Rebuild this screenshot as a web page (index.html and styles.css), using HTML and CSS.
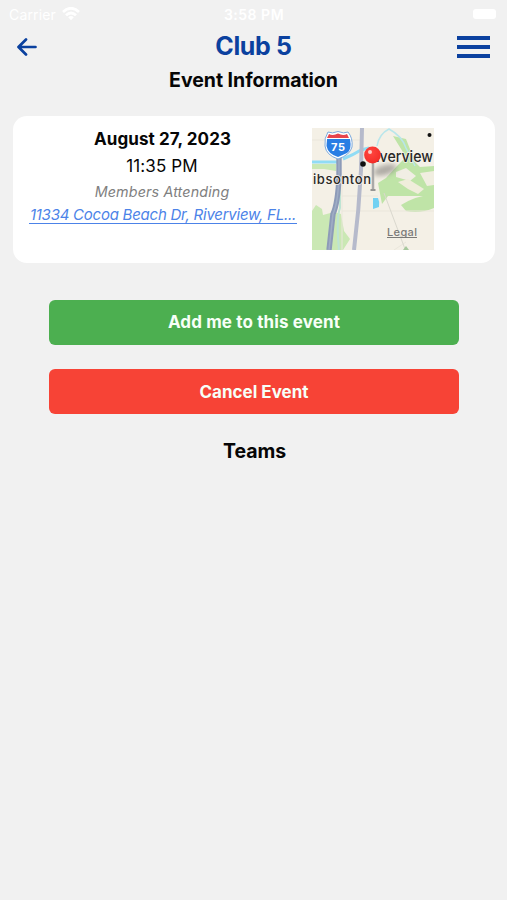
FILE: index.html
```html
<!DOCTYPE html>
<html lang="en">
<head>
<meta charset="utf-8">
<meta name="viewport" content="width=device-width, initial-scale=1">
<title>Event Information</title>
<link rel="stylesheet" href="styles.css">
</head>
<body>
<div class="status">
  <div class="carrier"><span>Carrier</span>
    <svg width="18" height="14" viewBox="0 0 18 14" fill="none" stroke="#fff" stroke-width="2.7"><path d="M1 5Q9-2.5 17 5M4 8.3Q9 3.7 14 8.3"/><path d="M6.2 10.2Q9 7.8 11.8 10.2L9 13.2Z" fill="#fff" stroke="none"/></svg>
  </div>
  <div class="clock">3:58 PM</div>
  <div class="battery"></div>
</div>
<header class="header">
  <svg class="back" width="20" height="18" viewBox="0 0 20 18" fill="none" stroke="#0b419f" stroke-width="2.7" stroke-linecap="round" stroke-linejoin="round"><path d="M9 1.5L1.5 9L9 16.5M2 9H18.5"/></svg>
  <h1 class="club">Club 5</h1>
  <div class="menu"><i></i><i></i><i></i></div>
</header>
<h2 class="title">Event Information</h2>
<main>
  <section class="card">
    <div class="details">
      <div class="date">August 27, 2023</div>
      <div class="time">11:35 PM</div>
      <div class="members">Members Attending</div>
      <a class="address">11334 Cocoa Beach Dr, Riverview, FL...</a>
    </div>
    <svg class="map" width="122" height="122" viewBox="0 0 122 122">
      <defs>
        <filter id="soft" x="-50%" y="-100%" width="200%" height="300%"><feGaussianBlur stdDeviation="2.6"/></filter>
        <radialGradient id="pin" cx=".4" cy=".35" r=".75"><stop offset="0" stop-color="#ff4640"/><stop offset="1" stop-color="#f22924"/></radialGradient>
      </defs>
      <rect width="122" height="122" fill="#f4f0e6"/>
      <path d="M0 83L4 77L10 81L11 87L22 84L29 86L32 103L38 111L31 122H0ZM0 36L24 36V43L12 41L0 41Z" fill="#cae8b4"/>
      <path d="M81 8L94 11L103 34L108 39L122 38V68H76L70 76L66 55L74 50L85 38L94 29Z" fill="#bfe4a7"/>
      <path d="M84 44L94 40L104 48L98 53L84 49Z" fill="#f1eee4"/>
      <path d="M86 54L96 51L112 61L106 66L96 61Z" fill="#f0eddb"/>
      <path d="M108 45L122 43V57L115 58Z" fill="#f1eee0"/>
      <path d="M89 77Q103 68 122 66V80Q108 86 94 83Z" fill="#bfe4a7"/>
      <g fill="none" stroke="#eae6db" stroke-width="1"><path d="M0 12H48M30 50V122M30 68H66M30 83H122M82 122L94 114"/></g>
      <path d="M0 34H25M31 31Q41 27 49 22L57 20" fill="none" stroke="#90dcf5" stroke-width="3"/>
      <path d="M65 18Q67 6 77 1Q90 8 94 20L103 38" fill="none" stroke="#b9e6eb" stroke-width="1.5"/>
      <path d="M28 53V80Q24 90 27 122" fill="none" stroke="#bde4d3" stroke-width="2"/>
      <path d="M72 65L93 121" fill="none" stroke="#dad8ce"/>
      <path d="M27 24V48Q26 75 21 86L17 122" fill="none" stroke="#8d9bb8" stroke-width="5.4"/>
      <path d="M27 24V48Q26 75 21 86L17 122" fill="none" stroke="#a0adc5" stroke-width="1.5"/>
      <path d="M50 0L49 42Q47 82 42 122" fill="none" stroke="#b6bacb" stroke-width="4"/>
      <path d="M61 70L66 70Q68 74 67 79L61 81Z" fill="#72d1f2"/>
      <path d="M91 122L94 118L97 122Z" fill="#a7c89d"/>
      <ellipse cx="73" cy="42" rx="12" ry="5" fill="#807d79" opacity=".6" filter="url(#soft)" transform="rotate(-16 73 42)"/>
      <path d="M16 4Q20 6 26 3.5Q32 6 36 4Q41 10 40 19Q38 27 26 31Q14 27 13 18Q12 10 16 4Z" fill="#fff" stroke="#7ba9de" stroke-width="1"/>
      <path d="M17 6Q21 8 26 5.5Q31 8 35 6L37 10H15Z" fill="#e7444d"/>
      <path d="M15 11H38Q40 22 35 25L26 29Q16 26 14.5 18Z" fill="#287de4"/>
      <text class="shield" x="19" y="22.5" textLength="14">75</text>
      <circle cx="51" cy="36" r="2.8" fill="#111"/><circle cx="117.5" cy="7" r="2" fill="#111"/>
      <text class="place" x="1" y="56" textLength="58">ibsonton</text>
      <text class="place large" x="64" y="34" textLength="57" lengthAdjust="spacingAndGlyphs">iverview</text>
      <path d="M61 33V61" stroke="#aaa9a8" stroke-width="2.5"/><path d="M58.5 62H63.5" stroke="#777" stroke-width="1.5"/>
      <circle cx="60.5" cy="27" r="8.4" fill="url(#pin)"/><circle cx="58" cy="24" r="2" fill="#ffcbc5"/>
      <text class="legal" x="75" y="108" textLength="30">Legal</text><path d="M75 109.5H105" stroke="#7b7a78"/>
    </svg>
  </section>
  <button class="action add">Add me to this event</button>
  <button class="action cancel">Cancel Event</button>
  <h2 class="teams">Teams</h2>
</main>
</body>
</html>
```
FILE: styles.css
```css
* { box-sizing: border-box; }
body { margin: 0; background: #f1f1f1; color: #060606; font-family: Inter, "Liberation Sans", sans-serif; white-space: nowrap; }
h1, h2 { margin: 0; }
.status { height: 28px; padding: 0 11px 0 9px; display: grid; grid-template-columns: 1fr auto 1fr; align-items: center; color: #fff; font-size: 14px; }
.carrier { display: flex; align-items: center; gap: 6px; letter-spacing: .15px; }
.clock { font-weight: 600; letter-spacing: .5px; margin-left: 3px; }
.battery { justify-self: end; width: 23px; height: 10px; border-radius: 3px; background: #fff; }
.header { height: 38px; padding: 0 17px; display: grid; grid-template-columns: 1fr auto 1fr; align-items: center; }
.club { color: #0b419f; font-size: 25px; line-height: 36px; height: 38px; font-weight: 700; letter-spacing: -.35px; }
.menu { justify-self: end; width: 33px; display: grid; gap: 5px; }
.menu i { height: 4px; background: #0b419f; }
.title { height: 28px; text-align: center; font-size: 19.5px; line-height: 28px; font-weight: 650; letter-spacing: -.03px; }
main { padding: 22px 12px 0 13px; }
.card { height: 147px; border-radius: 14px; background: #fff; padding: 12px 16px; display: flex; gap: 15px; }
.details { width: 268px; text-align: center; }
.date { font-size: 17px; line-height: 22px; font-weight: 700; padding-right: 1px; letter-spacing: .07px; }
.time { font-size: 17px; line-height: 32px; letter-spacing: .1px; padding-right: 2px; }
.members { font-size: 14.3px; line-height: 19px; height: 19px; letter-spacing: .14px; font-style: italic; color: #808080; padding-right: 2px; }
.address { display: block; width: 268px; height: 22px; margin-top: 1px; font-size: 15px; line-height: 25px; letter-spacing: -.24px; font-style: italic; color: #4c83e8; border-bottom: 1px solid #4c83e8; }
.map { flex: none; }
.place { font: 500 13px Inter, sans-serif; fill: #292827; stroke: #f6f3ec; stroke-width: 1.5px; paint-order: stroke; }
.large { font-size: 15.5px; }
.shield { font: 700 11px Inter, sans-serif; fill: #fff; }
.legal { font: 500 11px Inter, sans-serif; fill: #7b7a78; }
.action { display: block; width: 410px; height: 45px; margin: 37px 36px 0; padding: 0; border: 0; border-radius: 6px; font: 650 17px/45px Inter, sans-serif; letter-spacing: .13px; color: #f7fff7; }
.add { background: #4caf50; }
.cancel { background: #f74336; margin-top: 24px; padding-top: 1px; letter-spacing: 0; }
.teams { margin: 23px 0 0 1px; font-size: 19.5px; line-height: 28px; font-weight: 650; text-align: center; letter-spacing: -.05px; }
```
